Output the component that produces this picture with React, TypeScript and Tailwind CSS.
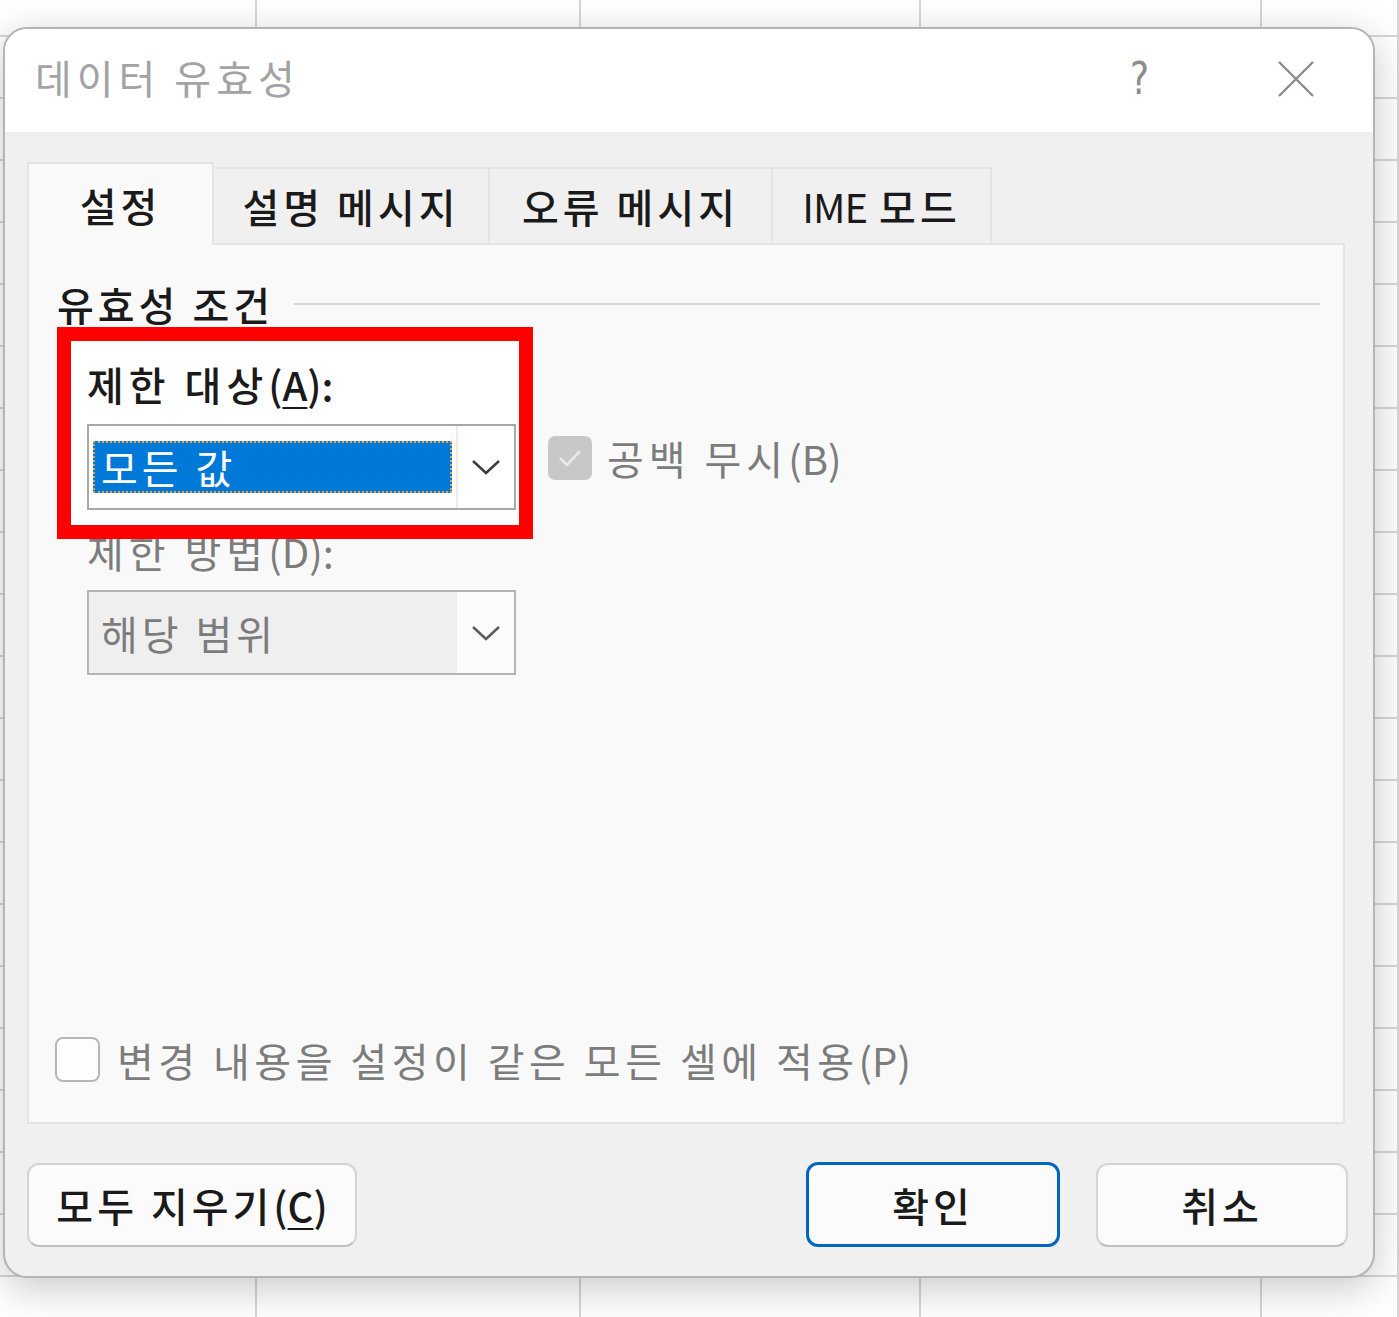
import React from "react";

const cols = ["w-[257px]", "w-[324px]", "w-[340px]", "w-[341px]", "flex-1"];
const rows = Array.from({ length: 22 }, (_, i) => i);

const Chevron = ({ className }: { className?: string }) => (
  <svg width="30" height="16" viewBox="0 0 30 16" className={className}>
    <path d="M2 2 L15 14 L28 2" fill="none" stroke="currentColor" strokeWidth="2.5" />
  </svg>
);

// latin part of a label, kept tight like the original font
const L = ({ children }: { children: React.ReactNode }) => (
  <span className="tracking-[0px]">{children}</span>
);

const Sheet = () => (
  <div className="absolute inset-0 flex flex-col bg-white">
    {rows.map((r) => (
      <div
        key={r}
        className={
          r === 0
            ? "flex h-[37px] shrink-0 border-b-2 border-[#d6d6d6]"
            : "flex h-[62px] shrink-0 border-b-2 border-[#d6d6d6]"
        }
      >
        {cols.map((c, i) => (
          <div key={i} className={`${c} h-full shrink-0 border-r-2 border-[#d6d6d6]`} />
        ))}
      </div>
    ))}
  </div>
);

const Tab = ({ children, width }: { children: React.ReactNode; width: string }) => (
  <div
    className={`${width} h-[76px] flex items-center justify-center border-t-2 border-r-2 border-[#e4e4e4] bg-[#f0f0f0] text-[40px] leading-none text-[#1a1a1a] font-medium tracking-[4px]`}
  >
    {children}
  </div>
);

export default function App() {
  return (
    <div className="relative w-[1399px] h-[1317px] overflow-hidden font-['Noto_Sans_CJK_KR','Liberation_Sans',sans-serif]">
      <Sheet />

      {/* dialog window */}
      <div className="absolute left-[3px] top-[27px] w-[1372px] h-[1251px] flex flex-col rounded-[24px] border-2 border-[#b4b4b4] bg-[#f0f0f0] shadow-[0_10px_40px_rgba(0,0,0,0.22)] overflow-hidden">
        {/* title bar */}
        <div className="h-[103px] shrink-0 flex items-center bg-white pl-[30px] pr-[58px] pb-[4px]">
          <span className="mb-[4px] text-[40px] leading-none text-[#a3a3a3] tracking-[5px]">데이터 유효성</span>
          <span className="ml-auto mr-[128px] font-['DejaVu_Sans_Condensed','Liberation_Sans',sans-serif] text-[40px] leading-none text-[#8c8c8c] scale-y-110">?</span>
          <svg width="38" height="38" viewBox="0 0 38 38">
            <path d="M2 2 L36 36 M36 2 L2 36" stroke="#8c8c8c" strokeWidth="2.4" />
          </svg>
        </div>

        {/* body */}
        <div className="flex-1 flex flex-col pt-[30px] pl-[22px] pr-[28px] pb-[30px]">
          {/* tabs */}
          <div className="flex items-end h-[81px]">
            <div className="relative z-10 w-[187px] h-[83px] -mb-[2px] flex items-center justify-center border-t-2 border-x-2 border-[#e4e4e4] bg-[#f9f9f9] text-[40px] leading-none text-[#1a1a1a] font-medium tracking-[4px]">
              설정
            </div>
            <Tab width="w-[276px]">설명 메시지</Tab>
            <Tab width="w-[283px]">오류 메시지</Tab>
            <Tab width="w-[219px]">
              <span className="tracking-[-1px] font-normal mr-[12px]">IME</span>모드
            </Tab>
          </div>

          {/* panel */}
          <div className="relative h-[881px] flex flex-col border-2 border-[#e4e4e4] bg-[#f9f9f9] px-[28px] pb-[40px]">
            <div className="mt-[35px] h-[48px] flex items-center gap-[20px]">
              <span className="text-[40px] leading-none text-[#1a1a1a] font-medium tracking-[4px]">유효성 조건</span>
              <div className="flex-1 h-[2px] bg-[#d8d8d8] mr-[-5px]" />
            </div>

            {/* first field, highlighted */}
            <div className="relative pl-[30px]">
              <div className="absolute left-0 -top-px w-[476px] h-[212px] bg-white" />
              <div className="absolute left-0 -top-px z-20 w-[476px] h-[212px] border-[14px] border-[#ff0000]" />
              <div className="relative z-10 mt-[32px] h-[48px] flex items-center text-[40px] leading-none text-[#1a1a1a] font-medium tracking-[5px]">
                제한 대상
                <L>
                  (<span className="underline underline-offset-[6px] decoration-2">A</span>):
                </L>
              </div>
              <div className="relative z-10 mt-[16px] flex items-start">
                <div className="w-[429px] h-[86px] flex border-2 border-[#a8a8a8] bg-white">
                  <div className="flex-1 flex items-center pl-[4px] pr-[4px]">
                    <div className="w-full h-[52px] flex items-center bg-[#0078d7] border-2 border-dotted border-[#e8a24a] pl-[6px] text-[40px] leading-none text-white tracking-[4px]">
                      모든 값
                    </div>
                  </div>
                  <div className="w-[58px] flex items-center justify-center border-l-2 border-[#ececec] text-[#3c3c3c]">
                    <Chevron />
                  </div>
                </div>
                <div className="ml-[32px] mt-[12px] w-[44px] h-[44px] flex items-center justify-center rounded-[7px] bg-[#c8c8c8]">
                  <svg width="26" height="20" viewBox="0 0 26 20">
                    <path d="M3 10 L10 17 L23 3" fill="none" stroke="#e8e8e8" strokeWidth="2.6" />
                  </svg>
                </div>
                <span className="ml-[15px] mt-[10px] h-[48px] flex items-center text-[40px] leading-none text-[#7c7c7c] tracking-[5px]">
                  공백 무시<L>(B)</L>
                </span>
              </div>
            </div>

            {/* second field, disabled */}
            <div className="pl-[30px] mt-[17px] h-[48px] flex items-center text-[40px] leading-none text-[#7c7c7c] tracking-[5px]">
              제한 방법<L>(D):</L>
            </div>
            <div className="ml-[30px] mt-[15px] w-[429px] h-[85px] flex border-2 border-[#b4b4b4] bg-[#efefef]">
              <div className="flex-1 flex items-center pl-[12px] text-[40px] leading-none text-[#7c7c7c] tracking-[4px]">해당 범위</div>
              <div className="w-[57px] flex items-center justify-center bg-[#fbfbfb] text-[#5c5c5c]">
                <Chevron />
              </div>
            </div>

            <div className="mt-auto flex items-center -ml-[2px]">
              <div className="w-[45px] h-[45px] rounded-[8px] border-2 border-[#b6b6b6] bg-[#fdfdfd]" />
              <span className="ml-[17px] text-[40px] leading-none text-[#7c7c7c] tracking-[4.5px]">
                변경 내용을 설정이 같은 모든 셀에 적용<L>(P)</L>
              </span>
            </div>
          </div>

          {/* buttons */}
          <div className="mt-[38px] flex items-center gap-[36px]">
            <button className="w-[330px] h-[84px] flex items-center justify-center rounded-[12px] border-2 border-[#d4d4d4] border-b-[#c0c0c0] bg-[#fbfbfb] text-[40px] leading-none text-[#1a1a1a] font-medium tracking-[4px]">
              모두 지우기
              <L>
                (<span className="underline underline-offset-[6px] decoration-2">C</span>)
              </L>
            </button>
            <button className="ml-auto w-[254px] h-[85px] flex items-center justify-center rounded-[12px] border-[3px] border-[#0067c0] bg-[#fbfbfb] text-[40px] leading-none text-[#1a1a1a] font-medium tracking-[4px]">
              확인
            </button>
            <button className="w-[252px] h-[84px] mr-[-3px] flex items-center justify-center rounded-[12px] border-2 border-[#d4d4d4] border-b-[#c0c0c0] bg-[#fbfbfb] text-[40px] leading-none text-[#1a1a1a] font-medium tracking-[4px]">
              취소
            </button>
          </div>
        </div>
      </div>
    </div>
  );
}
